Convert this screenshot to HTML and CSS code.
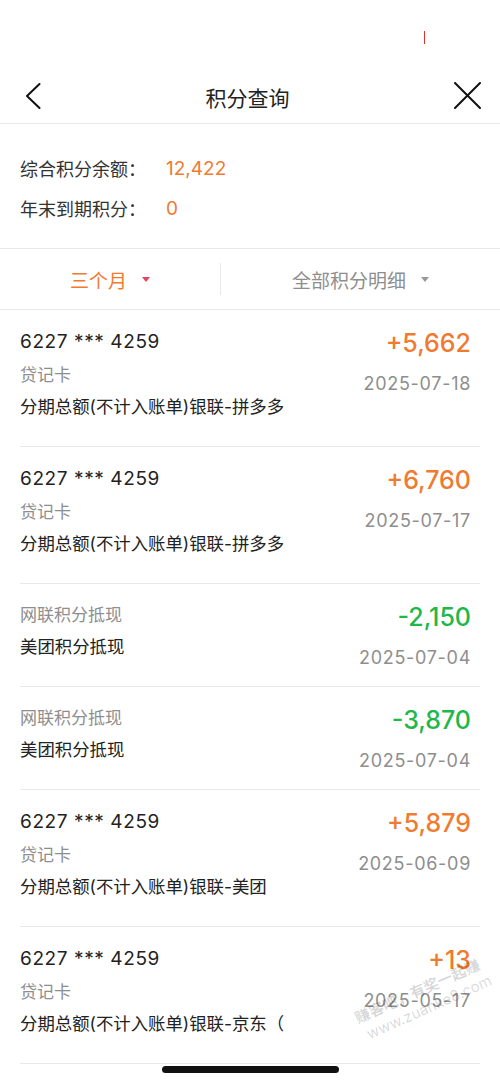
FILE: index.html
```html
<!doctype html>
<html lang="zh-CN">
  <head>
    <meta charset="utf-8">
    <meta name="viewport" content="width=device-width, initial-scale=1">
    <title>积分查询</title>
    <link rel="stylesheet" href="styles.css">
  </head>
  <body>
    <div class="status-bar">
      <span class="status-mark"></span>
    </div>

    <header class="nav">
      <button class="nav-btn" aria-label="返回">
        <svg width="16" height="26" viewBox="0 0 16 26">
          <path d="M14.5 1 L2 13 L14.5 25" fill="none" stroke="#111" stroke-width="2" stroke-linecap="round" stroke-linejoin="round"/>
        </svg>
      </button>
      <h1 class="nav-title">积分查询</h1>
      <button class="nav-btn" aria-label="关闭">
        <svg width="27" height="27" viewBox="0 0 27 27">
          <path d="M1 1 L26 26 M26 1 L1 26" fill="none" stroke="#111" stroke-width="2" stroke-linecap="round"/>
        </svg>
      </button>
    </header>

    <section class="summary">
      <div class="summary-row">
        <span class="summary-label">综合积分余额：</span>
        <span class="summary-value">12,422</span>
      </div>
      <div class="summary-row">
        <span class="summary-label">年末到期积分：</span>
        <span class="summary-value">0</span>
      </div>
    </section>

    <nav class="filters">
      <div class="filter filter-active">
        <span>三个月</span>
        <span class="caret"></span>
      </div>
      <div class="filter-divider"></div>
      <div class="filter">
        <span>全部积分明细</span>
        <span class="caret"></span>
      </div>
    </nav>

    <ul class="records">
      <li class="record">
        <div class="record-main">
          <div class="card-no">6227 *** 4259</div>
          <div class="card-type">贷记卡</div>
          <div class="desc">分期总额(不计入账单)银联-拼多多</div>
        </div>
        <div class="record-side">
          <div class="amount plus">+5,662</div>
          <div class="date">2025-07-18</div>
        </div>
      </li>
      <li class="record">
        <div class="record-main">
          <div class="card-no">6227 *** 4259</div>
          <div class="card-type">贷记卡</div>
          <div class="desc">分期总额(不计入账单)银联-拼多多</div>
        </div>
        <div class="record-side">
          <div class="amount plus">+6,760</div>
          <div class="date">2025-07-17</div>
        </div>
      </li>
      <li class="record">
        <div class="record-main">
          <div class="card-type">网联积分抵现</div>
          <div class="desc">美团积分抵现</div>
        </div>
        <div class="record-side">
          <div class="amount minus">-2,150</div>
          <div class="date">2025-07-04</div>
        </div>
      </li>
      <li class="record">
        <div class="record-main">
          <div class="card-type">网联积分抵现</div>
          <div class="desc">美团积分抵现</div>
        </div>
        <div class="record-side">
          <div class="amount minus">-3,870</div>
          <div class="date">2025-07-04</div>
        </div>
      </li>
      <li class="record">
        <div class="record-main">
          <div class="card-no">6227 *** 4259</div>
          <div class="card-type">贷记卡</div>
          <div class="desc">分期总额(不计入账单)银联-美团</div>
        </div>
        <div class="record-side">
          <div class="amount plus">+5,879</div>
          <div class="date">2025-06-09</div>
        </div>
      </li>
      <li class="record">
        <div class="record-main">
          <div class="card-no">6227 *** 4259</div>
          <div class="card-type">贷记卡</div>
          <div class="desc">分期总额(不计入账单)银联-京东（</div>
        </div>
        <div class="record-side">
          <div class="amount plus">+13</div>
          <div class="date">2025-05-17</div>
        </div>
      </li>
    </ul>

    <div class="watermark">
      <span>赚客吧，有奖一起赚</span>
      <span class="watermark-url">www.zuanke8.com</span>
    </div>
    <div class="home-indicator"></div>
  </body>
</html>
```

FILE: styles.css
```css
body {
  margin: 0;
  background-color: #fff;
  color: #222;
  font-family: Inter, "Noto Sans CJK SC", sans-serif;

  --color-orange: #ef7a30;
  --color-green: #1eb84a;
  --color-gray: #8e8e8e;
  --color-line: #e9e9e9;
}
.status-bar {
  height: 68px;
  display: flex;
  justify-content: flex-end;
  align-items: flex-start;
  padding: 31px 75px 0 0;
  box-sizing: border-box;
}
.status-mark {
  width: 1.5px;
  height: 13px;
  background-color: #e0322c;
}
.nav {
  height: 55px;
  display: flex;
  align-items: center;
  justify-content: space-between;
  padding: 0 19px 0 25px;
  border-bottom: 1px solid var(--color-line);
}
.nav-btn {
  background: none;
  border: 0;
  padding: 0;
  display: flex;
}
.nav-title {
  margin: 0;
  font-size: 21px;
  font-weight: 400;
  color: #222;
  padding-top: 3px;
}
.summary {
  padding: 24px 20px 20px;
  border-bottom: 1px solid var(--color-line);
}
.summary-row {
  display: flex;
  align-items: center;
  height: 40px;
  font-size: 18px;
}
.summary-label {
  width: 146px;
  color: #333;
}
.summary-value {
  color: var(--color-orange);
  font-size: 19px;
}
.filters {
  display: grid;
  grid-template-columns: 220px 1px 1fr;
  align-items: center;
  height: 60px;
  border-bottom: 1px solid var(--color-line);
}
.filter {
  display: flex;
  justify-content: center;
  align-items: center;
  gap: 15px;
  font-size: 19px;
  color: var(--color-gray);
}
.filter-active {
  color: var(--color-orange);
}
.filter-divider {
  height: 32px;
  background-color: var(--color-line);
}
.caret {
  width: 0;
  height: 0;
  border-left: 4px solid transparent;
  border-right: 4px solid transparent;
  border-top: 5px solid #999;
}
.filter-active .caret {
  border-top-color: #e8445e;
}
.records {
  list-style: none;
  margin: 0;
  padding: 0;
}
.record {
  display: flex;
  justify-content: space-between;
  margin: 0 20px;
  border-bottom: 1px solid var(--color-line);
}
.record-main {
  padding: 18px 0 26px;
}
.card-no {
  line-height: 27px;
  font-size: 19px;
  letter-spacing: 0.6px;
}
.card-type {
  line-height: 26px;
  margin-top: 7px;
  font-size: 17px;
  color: var(--color-gray);
}
.desc {
  line-height: 26px;
  margin-top: 6px;
  font-size: 17.4px;
  color: #222;
}
.record-main > :first-child {
  margin-top: 0;
}
.record-side {
  padding: 17px 9px 0 0;
  text-align: right;
}
.amount {
  line-height: 32px;
  font-size: 25px;
  font-weight: 500;
}
.plus {
  color: var(--color-orange);
}
.minus {
  color: var(--color-green);
}
.date {
  margin-top: 13px;
  line-height: 24px;
  font-size: 18px;
  color: var(--color-gray);
  letter-spacing: 0.7px;
}
.watermark {
  position: absolute;
  left: 352px;
  top: 1010px;
  display: flex;
  flex-direction: column;
  align-items: flex-start;
  transform: rotate(-24deg);
  transform-origin: left top;
  color: rgba(0, 0, 0, 0.16);
  font-size: 15px;
  line-height: 19px;
  font-weight: 700;
  pointer-events: none;
}
.watermark-url {
  padding-left: 4px;
  font-weight: 400;
}
.home-indicator {
  position: absolute;
  left: 162px;
  top: 1066px;
  width: 177px;
  height: 7px;
  border-radius: 4px;
  background-color: #111;
}
```
